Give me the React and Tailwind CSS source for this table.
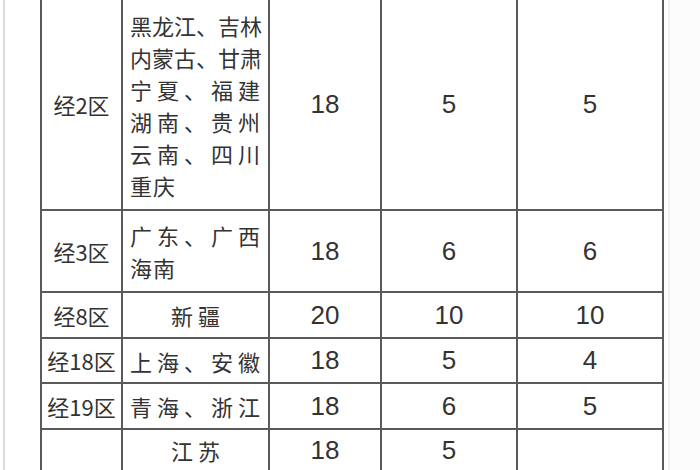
import React from "react";

const cjk = { fontFamily: '"Noto Sans CJK SC", "Noto Sans", sans-serif' };
const num = { fontFamily: '"Liberation Sans", Arial, sans-serif' };

const rows = [
  {
    zone: "经2区",
    lines: ["黑龙江、吉林", "内蒙古、甘肃", "宁夏、福建", "湖南、贵州", "云南、四川", "重庆"],
    a: "18",
    b: "5",
    c: "5",
    h: "h-[211px]",
  },
  { zone: "经3区", lines: ["广东、广西", "海南"], a: "18", b: "6", c: "6", h: "h-[82px]" },
  { zone: "经8区", center: "新疆", a: "20", b: "10", c: "10", h: "h-[46px]" },
  { zone: "经18区", lines: ["上海、安徽"], a: "18", b: "5", c: "4", h: "h-[45px]" },
  { zone: "经19区", lines: ["青海、浙江"], a: "18", b: "6", c: "5", h: "h-[46px]" },
  { zone: "", center: "江苏", a: "18", b: "5", c: "", h: "h-[40px]", last: true },
];

function Province({ row }) {
  if (row.center) {
    return (
      <div className="flex h-full items-center justify-center gap-[5px] text-[22px]" style={cjk}>
        {row.center.split("").map((ch, i) => (
          <span key={i}>{ch}</span>
        ))}
      </div>
    );
  }
  return (
    <div className="flex h-full flex-col justify-center pl-[7px] pr-[8px] text-[22px] leading-[32px]" style={cjk}>
      {row.lines.map((line, i) => {
        const isLast = i === row.lines.length - 1 && row.lines.length > 1;
        return (
          <div key={i} className={isLast ? "flex gap-[1px]" : "flex justify-between"}>
            {line.split("").map((ch, j) => (
              <span key={j}>{ch}</span>
            ))}
          </div>
        );
      })}
    </div>
  );
}

export default function App() {
  return (
    <div className="flex w-[700px] h-[470px] overflow-hidden bg-white text-[#333]">
      <div className="ml-[3px] w-[2px] h-full bg-[#dadada] shrink-0"></div>
      <div className="ml-[35px] w-[624px] h-full shrink-0 border-l-2 border-[#5a5a5a]">
        {rows.map((row, i) => (
          <div key={i} className={`flex ${row.h} ${row.last ? "" : "border-b-2"} border-[#5a5a5a]`}>
            <div className="w-[81px] shrink-0 border-r-2 border-[#5a5a5a] flex items-center justify-center text-[22px]" style={cjk}>
              {row.zone}
            </div>
            <div className="w-[147px] shrink-0 border-r-2 border-[#5a5a5a]">
              <Province row={row} />
            </div>
            <div className="w-[112px] shrink-0 border-r-2 border-[#5a5a5a] flex items-center justify-center text-[26px]" style={num}>
              {row.a}
            </div>
            <div className="w-[136px] shrink-0 border-r-2 border-[#5a5a5a] flex items-center justify-center text-[26px]" style={num}>
              {row.b}
            </div>
            <div className="w-[146px] shrink-0 border-r-2 border-[#5a5a5a] flex items-center justify-center text-[26px]" style={num}>
              {row.c}
            </div>
          </div>
        ))}
      </div>
      <div className="ml-[4px] w-[2px] h-full bg-[#f0f0f0] shrink-0"></div>
      <div className="flex-1 h-full bg-[#fcfcfc]"></div>
    </div>
  );
}
